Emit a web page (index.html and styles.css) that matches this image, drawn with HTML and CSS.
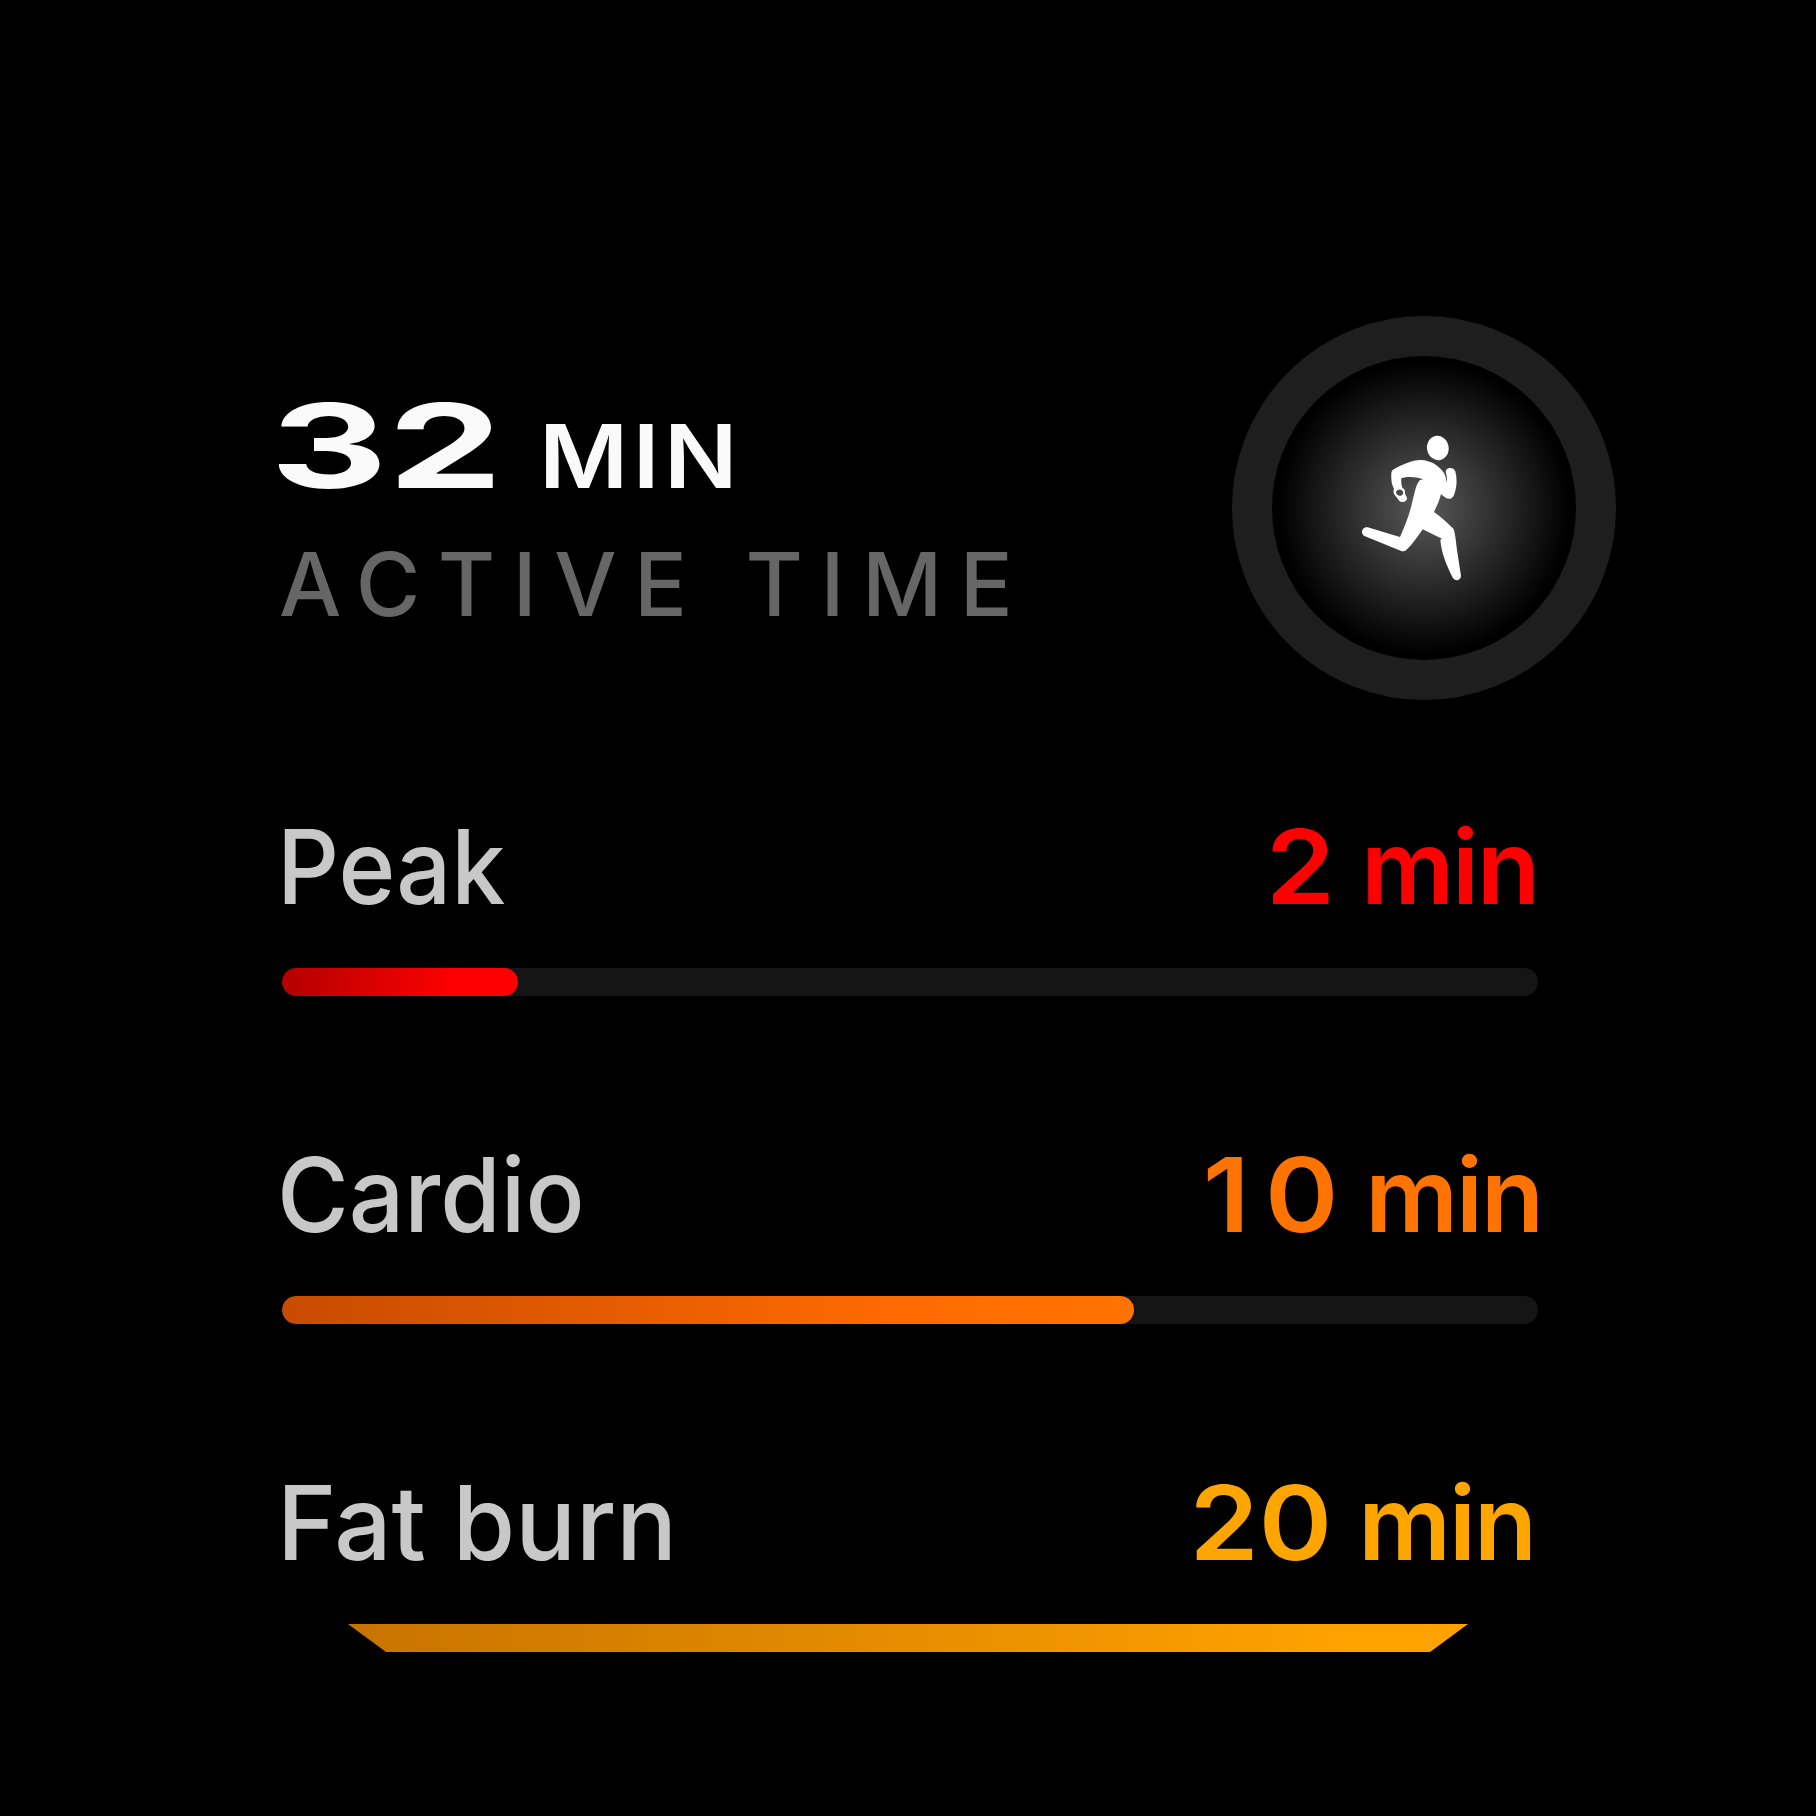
FILE: index.html
```html
<!DOCTYPE html>
<html lang="en">
<head>
<meta charset="utf-8">
<title>Active time</title>
<link rel="stylesheet" href="styles.css">
</head>
<body>
<main class="screen">
  <header class="header">
    <div class="summary">
      <div class="total"><span class="total-value">32</span><span class="total-unit">MIN</span></div>
      <div class="caption">ACTIVE TIME</div>
    </div>
    <div class="badge">
      <svg class="runner" viewBox="42 9 420 510" aria-hidden="true">
        <ellipse cx="293.500" cy="84" rx="32.500" ry="36.500" transform="rotate(-12 293.500 84)"/>
        <path fill-rule="evenodd" d="M159 149C186 134 216 120 242 120C273 121 297 137 312 159C317 168 319 178 320 188C322 175 320 165 317 156C317 140 341 140 346 154C352 178 351 203 341 227C334 241 319 239 303 222C298 243 290 258 282 276C302 290 323 309 341 327C347 347 348 369 351 390L363 468C362 484 342 484 337 471C322 440 304 401 301 359L306 356L248 328C234 349 219 371 198 391Q191 396 182 392L75 349C60 343 65 319 83 322L180 351C196 315 210 280 218 240C225 216 227 196 239 181L249 178C226 169 201 169 184 175C183 186 184 195 187 203Q197 208 195 221L201 233C203 246 183 251 176 240L162 222C160 216 160 211 162 206C154 193 153 174 154 158Q155 152 159 149ZM168 217C170 230 188 231 190 218C187 206 171 206 168 217Z"/>
      </svg>
    </div>
  </header>
  <section class="zones">
    <div class="zone peak">
      <div class="row"><span class="name">Peak</span><span class="value"><span class="number">2</span> <span class="unit">min</span></span></div>
      <div class="track"><div class="fill" style="width:236px"></div></div>
    </div>
    <div class="zone cardio">
      <div class="row"><span class="name">Cardio</span><span class="value"><span class="number">10</span> <span class="unit">min</span></span></div>
      <div class="track"><div class="fill" style="width:852px"></div></div>
    </div>
    <div class="zone fat-burn">
      <div class="row"><span class="name">Fat burn</span><span class="value"><span class="number">20</span> <span class="unit">min</span></span></div>
      <div class="track"><div class="fill" style="width:1256px"></div></div>
    </div>
  </section>
</main>
</body>
</html>
```
FILE: styles.css
```css
* { box-sizing: border-box; }
body { margin: 0; background: #000; font-family: Inter, "Liberation Sans", sans-serif; }
.screen { width: 1816px; height: 1816px; padding: 316px 200px 0 282px; overflow: hidden; }

.header { display: flex; justify-content: space-between; height: 384px; }
.summary { padding-top: 70px; white-space: nowrap; }
.total { display: flex; align-items: baseline; height: 120px; line-height: 120px; color: #fafafa; }
.total-value { width: 269px; margin-left: -12px; font-size: 117px; font-weight: 700; transform: scaleX(1.56); transform-origin: left; }
.total-unit { font-size: 88px; font-weight: 600; letter-spacing: 4px; transform: scaleX(1.1); transform-origin: left; }
.caption { margin: 28px 0 0 -3px; font-size: 88px; line-height: 100px; font-weight: 500; letter-spacing: 17.5px; color: #666; }

.badge {
  display: flex; align-items: center; justify-content: center;
  width: 384px; height: 384px; border: 40px solid #1e1e1e; border-radius: 50%;
  background: radial-gradient(circle, #5a5a5a 0, #000 146px);
}
.runner { width: 140px; height: 170px; fill: #fff; }

.zones { display: grid; gap: 139px; width: 1256px; margin-top: 107px; }
.row { display: flex; justify-content: space-between; height: 120px; margin-bottom: 41px; font-size: 103px; line-height: 120px; white-space: nowrap; }
.name { margin-left: -5px; font-weight: 500; color: #c8c8c8; transform-origin: left; }
.value { font-weight: 600; }
.number { display: inline-block; transform: scaleX(1.08); transform-origin: right; }
.unit { letter-spacing: -2px; }
.track { height: 28px; border-radius: 14px; background: #151515; overflow: hidden; }
.fill { height: 28px; border-radius: 14px; }

.peak .name { transform: scaleX(.94); }
.peak .value { color: #f00; }
.peak .fill { background: linear-gradient(90deg, #b40000, #f00 75%); }
.cardio .name { transform: scaleX(.95); }
.cardio .value { margin-right: -4px; color: #ff7300; }
.cardio .number { margin-right: -14px; letter-spacing: 14px; }
.cardio .fill { background: linear-gradient(90deg, #c84b00, #ff6a00 72%, #ff7300); }
.fat-burn .name { transform: scaleX(.98); }
.fat-burn .value { margin-right: 3px; color: #ffa500; }
.fat-burn .track { border-radius: 0; clip-path: polygon(66px 0, 1186px 0, 1148px 100%, 104px 100%); }
.fat-burn .fill { background: linear-gradient(90deg, #c47000, #ffa200 85%); }
```
